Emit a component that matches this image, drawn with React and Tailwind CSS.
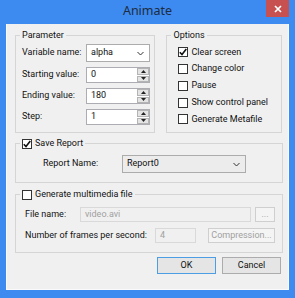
import React from 'react';

function Check({ checked }) {
  return (
    <span className="w-[10px] h-[10px] border border-[#333] bg-white flex items-center justify-center shrink-0">
      {checked && (
        <svg width="8" height="8" viewBox="0 0 8 8">
          <path d="M0.8 4.2 L3 6.6 L7.3 1" fill="none" stroke="#111" strokeWidth="1.6" />
        </svg>
      )}
    </span>
  );
}

function Chevron() {
  return (
    <svg width="7" height="5" viewBox="0 0 7 5" className="shrink-0">
      <path d="M0.5 1 L3.5 4 L6.5 1" fill="none" stroke="#333" strokeWidth="1" />
    </svg>
  );
}

function Combo({ value, className }) {
  return (
    <div className={`h-[18px] border border-[#acacac] flex items-center pl-[4px] pr-[5px] ${className}`}>
      <span className="flex-1">{value}</span>
      <Chevron />
    </div>
  );
}

function Spin({ value }) {
  return (
    <div className="h-[16px] w-[64px] flex border border-[#abadb3] bg-white">
      <span className="flex-1 pl-[4px] flex items-center">{value}</span>
      <div className="w-[12px] flex flex-col gap-[1px] bg-white">
        <span className="flex-1 bg-[#e4e4e4] border border-[#b4b4b4] flex items-center justify-center">
          <svg width="5" height="3" viewBox="0 0 5 3"><path d="M0 3 L2.5 0 L5 3 Z" fill="#222" /></svg>
        </span>
        <span className="flex-1 bg-[#e4e4e4] border border-[#b4b4b4] flex items-center justify-center">
          <svg width="5" height="3" viewBox="0 0 5 3"><path d="M0 0 L2.5 3 L5 0 Z" fill="#222" /></svg>
        </span>
      </div>
    </div>
  );
}

function Group({ title, className, children, legend }) {
  return (
    <div className={`relative border border-[#d5d5d5] ${className}`}>
      <div className="absolute top-[-7px] left-[4px] bg-[#f0f0f0] px-[2px] h-[13px] flex items-center gap-[3px] leading-none">
        {legend || title}
      </div>
      {children}
    </div>
  );
}

function Btn({ children, className }) {
  return (
    <div className={`flex items-center justify-center ${className}`}>{children}</div>
  );
}

export default function App() {
  const options = [
    ['Clear screen', true],
    ['Change color', false],
    ['Pause', false],
    ['Show control panel', false],
    ['Generate Metafile', false],
  ];

  return (
    <div className="w-[295px] h-[298px] bg-[#3d8bf0] flex flex-col font-['Roboto',sans-serif] text-[9px] text-[#111] whitespace-nowrap">
      <div className="h-[24px] relative flex items-center justify-center">
        <span className="text-[12.5px] text-[#1d2b40] pb-[1px] font-['Noto_Sans',sans-serif]">Animate</span>
        <div className="absolute right-[6px] top-0 w-[23px] h-[17px] bg-[#c75050] flex items-center justify-center">
          <svg width="8" height="8" viewBox="0 0 8 8">
            <path d="M1 1 L7 7 M7 1 L1 7" stroke="#fff" strokeWidth="1.7" />
          </svg>
        </div>
      </div>

      <div className="mx-[6px] h-[266px] bg-[#f0f0f0] border-l border-r border-b border-[#fafafa] flex flex-col pl-[8px] pr-[6px] pt-[11px]">
        <div className="flex gap-[11px]">
          <Group title="Parameter" className="w-[141px] h-[98px] pt-[8px] pl-[6px]">
            <div className="flex flex-col gap-[5px]">
              <div className="flex items-center">
                <span className="w-[64px]">Variable name:</span>
                <Combo value="alpha" className="w-[64px] bg-white" />
              </div>
              <div className="flex items-center">
                <span className="w-[64px]">Starting value:</span>
                <Spin value="0" />
              </div>
              <div className="flex items-center">
                <span className="w-[64px]">Ending value:</span>
                <Spin value="180" />
              </div>
              <div className="flex items-center">
                <span className="w-[64px]">Step:</span>
                <Spin value="1" />
              </div>
            </div>
          </Group>

          <Group title="Options" className="w-[116px] h-[98px] pt-[8px] pl-[11px]">
            <div className="flex flex-col">
              {options.map(([label, checked]) => (
                <div key={label} className="h-[16.75px] flex items-center gap-[3px]">
                  <Check checked={checked} />
                  <span>{label}</span>
                </div>
              ))}
            </div>
          </Group>
        </div>

        <Group
          className="mt-[10px] w-[268px] h-[40px] pt-[11px] pl-[27px]"
          legend={<><Check checked /><span>Save Report</span></>}
        >
          <div className="flex items-center">
            <span className="w-[79px]">Report Name:</span>
            <Combo value="Report0" className="w-[124px] bg-[#ececec]" />
          </div>
        </Group>

        <Group
          className="mt-[11px] w-[268px] h-[59px] pt-[12px] pl-[9px]"
          legend={<><Check /><span>Generate multimedia file</span></>}
        >
          <div className="flex flex-col gap-[6px]">
            <div className="flex items-center">
              <span className="w-[55px]">File name:</span>
              <div className="w-[171px] h-[15px] border border-[#d9d9d9] bg-[#f0f0f0] pl-[4px] flex items-center text-[#a0a0a0]">video.avi</div>
              <Btn className="ml-[4px] w-[20px] h-[15px] border border-[#cfcfcf] bg-[#f4f4f4] text-[#a0a0a0]">...</Btn>
            </div>
            <div className="flex items-center">
              <span className="w-[130px]">Number of frames per second:</span>
              <div className="w-[41px] h-[15px] border border-[#d9d9d9] bg-[#f0f0f0] pl-[4px] flex items-center text-[#a0a0a0]">4</div>
              <Btn className="ml-[12px] w-[67px] h-[15px] border border-[#cfcfcf] bg-[#f4f4f4] text-[#a0a0a0]">Compression...</Btn>
            </div>
          </div>
        </Group>

        <div className="mt-[4px] flex justify-end gap-[6px] pr-[1px]">
          <Btn className="w-[59px] h-[17px] border border-[#4d9de5] bg-[#e5e5e5]">OK</Btn>
          <Btn className="w-[59px] h-[17px] border border-[#acacac] bg-[#e5e5e5]">Cancel</Btn>
        </div>
      </div>
    </div>
  );
}
